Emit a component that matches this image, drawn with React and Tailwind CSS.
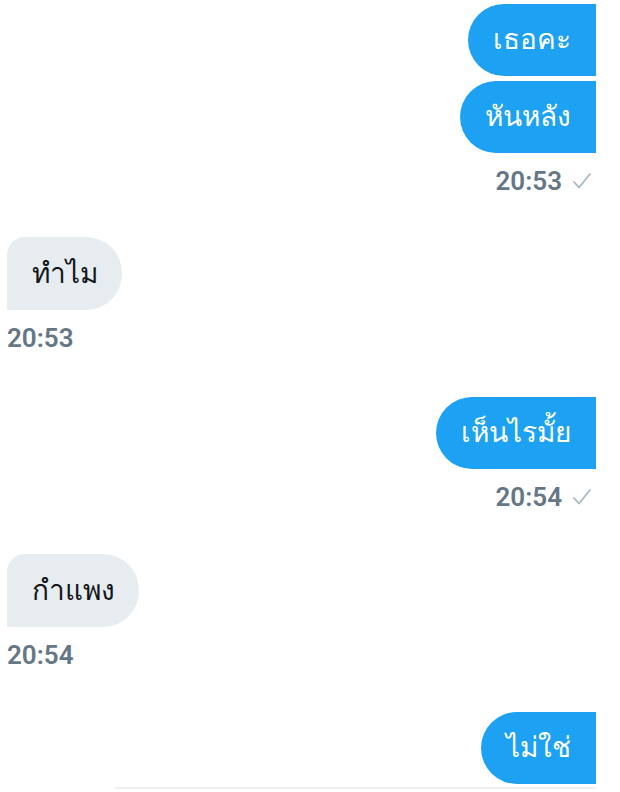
const messages = [
  { from: "me", texts: ["เธอคะ", "หันหลัง"], time: "20:53", mt: "mt-[4px]" },
  { from: "them", texts: ["ทำไม"], time: "20:53", mt: "mt-[41px]" },
  { from: "me", texts: ["เห็นไรมั้ย"], time: "20:54", mt: "mt-[44px]" },
  { from: "them", texts: ["กำแพง"], time: "20:54", mt: "mt-[42px]" },
  { from: "me", texts: ["ไม่ใช่"], time: null, mt: "mt-[42px]" },
];

function Check() {
  return (
    <svg width="20" height="18" viewBox="0 0 20 18" className="ml-[10px]">
      <path
        d="M2 10 L7 15.5 L18 2"
        fill="none"
        stroke="#aab8c2"
        strokeWidth="1.8"
        strokeLinecap="round"
        strokeLinejoin="round"
      />
    </svg>
  );
}

function Group({ msg }) {
  const mine = msg.from === "me";
  return (
    <div className={`${msg.mt} flex flex-col ${mine ? "items-end" : "items-start"}`}>
      <div className="flex flex-col gap-[5px]">
        {msg.texts.map((t) => (
          <div
            key={t}
            className={
              mine
                ? "self-end h-[72px] flex items-center pl-[25px] pr-[25px] bg-[#1da1f2] text-white rounded-l-[36px]"
                : "self-start h-[73px] flex items-center pl-[25px] pr-[24px] bg-[#e6ecf0] text-[#14171a] rounded-tl-[18px] rounded-r-[36px]"
            }
          >
            <span className="text-[28px] leading-none font-medium">{t}</span>
          </div>
        ))}
      </div>
      {msg.time && (
        <div
          className={`mt-[13px] h-[30px] flex items-center text-[#657786] text-[26px] font-semibold ${
            mine ? "pr-[4px]" : ""
          }`}
        >
          <span>{msg.time}</span>
          {mine && <Check />}
        </div>
      )}
    </div>
  );
}

export default function App() {
  return (
    <div
      className="w-[620px] h-[792px] bg-white overflow-hidden flex flex-col"
      style={{ fontFamily: "Roboto, 'Noto Sans', sans-serif" }}
    >
      <div className="ml-[7px] w-[589px] flex flex-col">
        {messages.map((m, i) => (
          <Group key={i} msg={m} />
        ))}
      </div>
      <div className="mt-[3px] ml-[115px] w-[481px] border-t-2 border-[#eef1f3]" />
    </div>
  );
}
